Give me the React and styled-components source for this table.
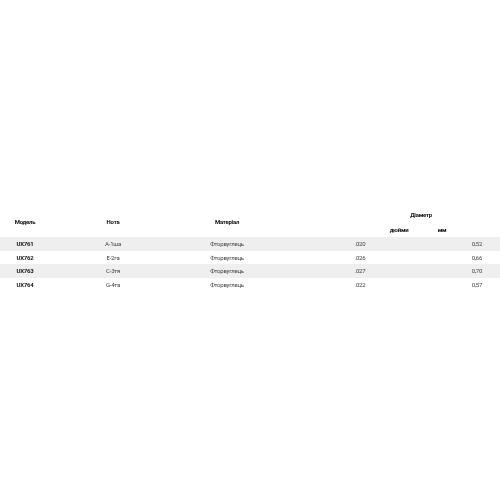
import styled, { createGlobalStyle } from "styled-components";

const Global = createGlobalStyle`
  body {
    margin: 0;
    background: #fff;
    font-family: Roboto, "Liberation Sans", Arial, sans-serif;
    -webkit-font-smoothing: antialiased;
  }
`;

const Page = styled.div`
  padding-top: 206px;
  will-change: transform;
`;

const Head = styled.div`
  display: grid;
  grid-template-columns: 50px 126px 102px 100px 42px 44px 1fr;
  grid-template-rows: 16px 14px;
  align-items: center;
  font-size: 6px;
  letter-spacing: -0.25px;
  font-weight: 700;
  color: #111;
`;

const HeadCell = styled.div`
  text-align: center;
  grid-column: ${(p) => p.col};
  grid-row: ${(p) => p.row || "1 / 3"};
`;

const Body = styled.div`
  display: flex;
  flex-direction: column;
  margin-top: 1px;
`;

const Row = styled.div`
  display: grid;
  grid-template-columns: 50px 126px 102px 164px 1fr;
  align-items: center;
  height: 13.6px;
  font-size: 6px;
  letter-spacing: -0.25px;
  background: ${(p) => (p.$shade ? "#efefef" : "#fff")};
`;

const Cell = styled.div`
  text-align: ${(p) => p.$align || "center"};
  padding-right: ${(p) => p.$pr || 0}px;
  font-weight: ${(p) => (p.$bold ? 700 : 400)};
  color: ${(p) => (p.$bold ? "#111" : "#444")};
`;

const rows = [
  ["UX761", "A-1ша", "Фторвуглець", ".020", "0,52"],
  ["UX762", "E-2га", "Фторвуглець", ".026", "0,66"],
  ["UX763", "C-3тя", "Фторвуглець", ".027", "0,70"],
  ["UX764", "G-4та", "Фторвуглець", ".022", "0,57"],
];

export default function App() {
  return (
    <>
      <Global />
      <Page>
        <Head>
          <HeadCell col="1">Модель</HeadCell>
          <HeadCell col="2">Нота</HeadCell>
          <HeadCell col="3">Матеріал</HeadCell>
          <HeadCell col="5 / 7" row="1">Діаметр</HeadCell>
          <HeadCell col="5" row="2">дюйми</HeadCell>
          <HeadCell col="6" row="2">мм</HeadCell>
        </Head>
        <Body>
          {rows.map((r, i) => (
            <Row key={r[0]} $shade={i % 2 === 0}>
              <Cell $bold>{r[0]}</Cell>
              <Cell>{r[1]}</Cell>
              <Cell>{r[2]}</Cell>
              <Cell>{r[3]}</Cell>
              <Cell $align="right" $pr={18}>{r[4]}</Cell>
            </Row>
          ))}
        </Body>
      </Page>
    </>
  );
}
